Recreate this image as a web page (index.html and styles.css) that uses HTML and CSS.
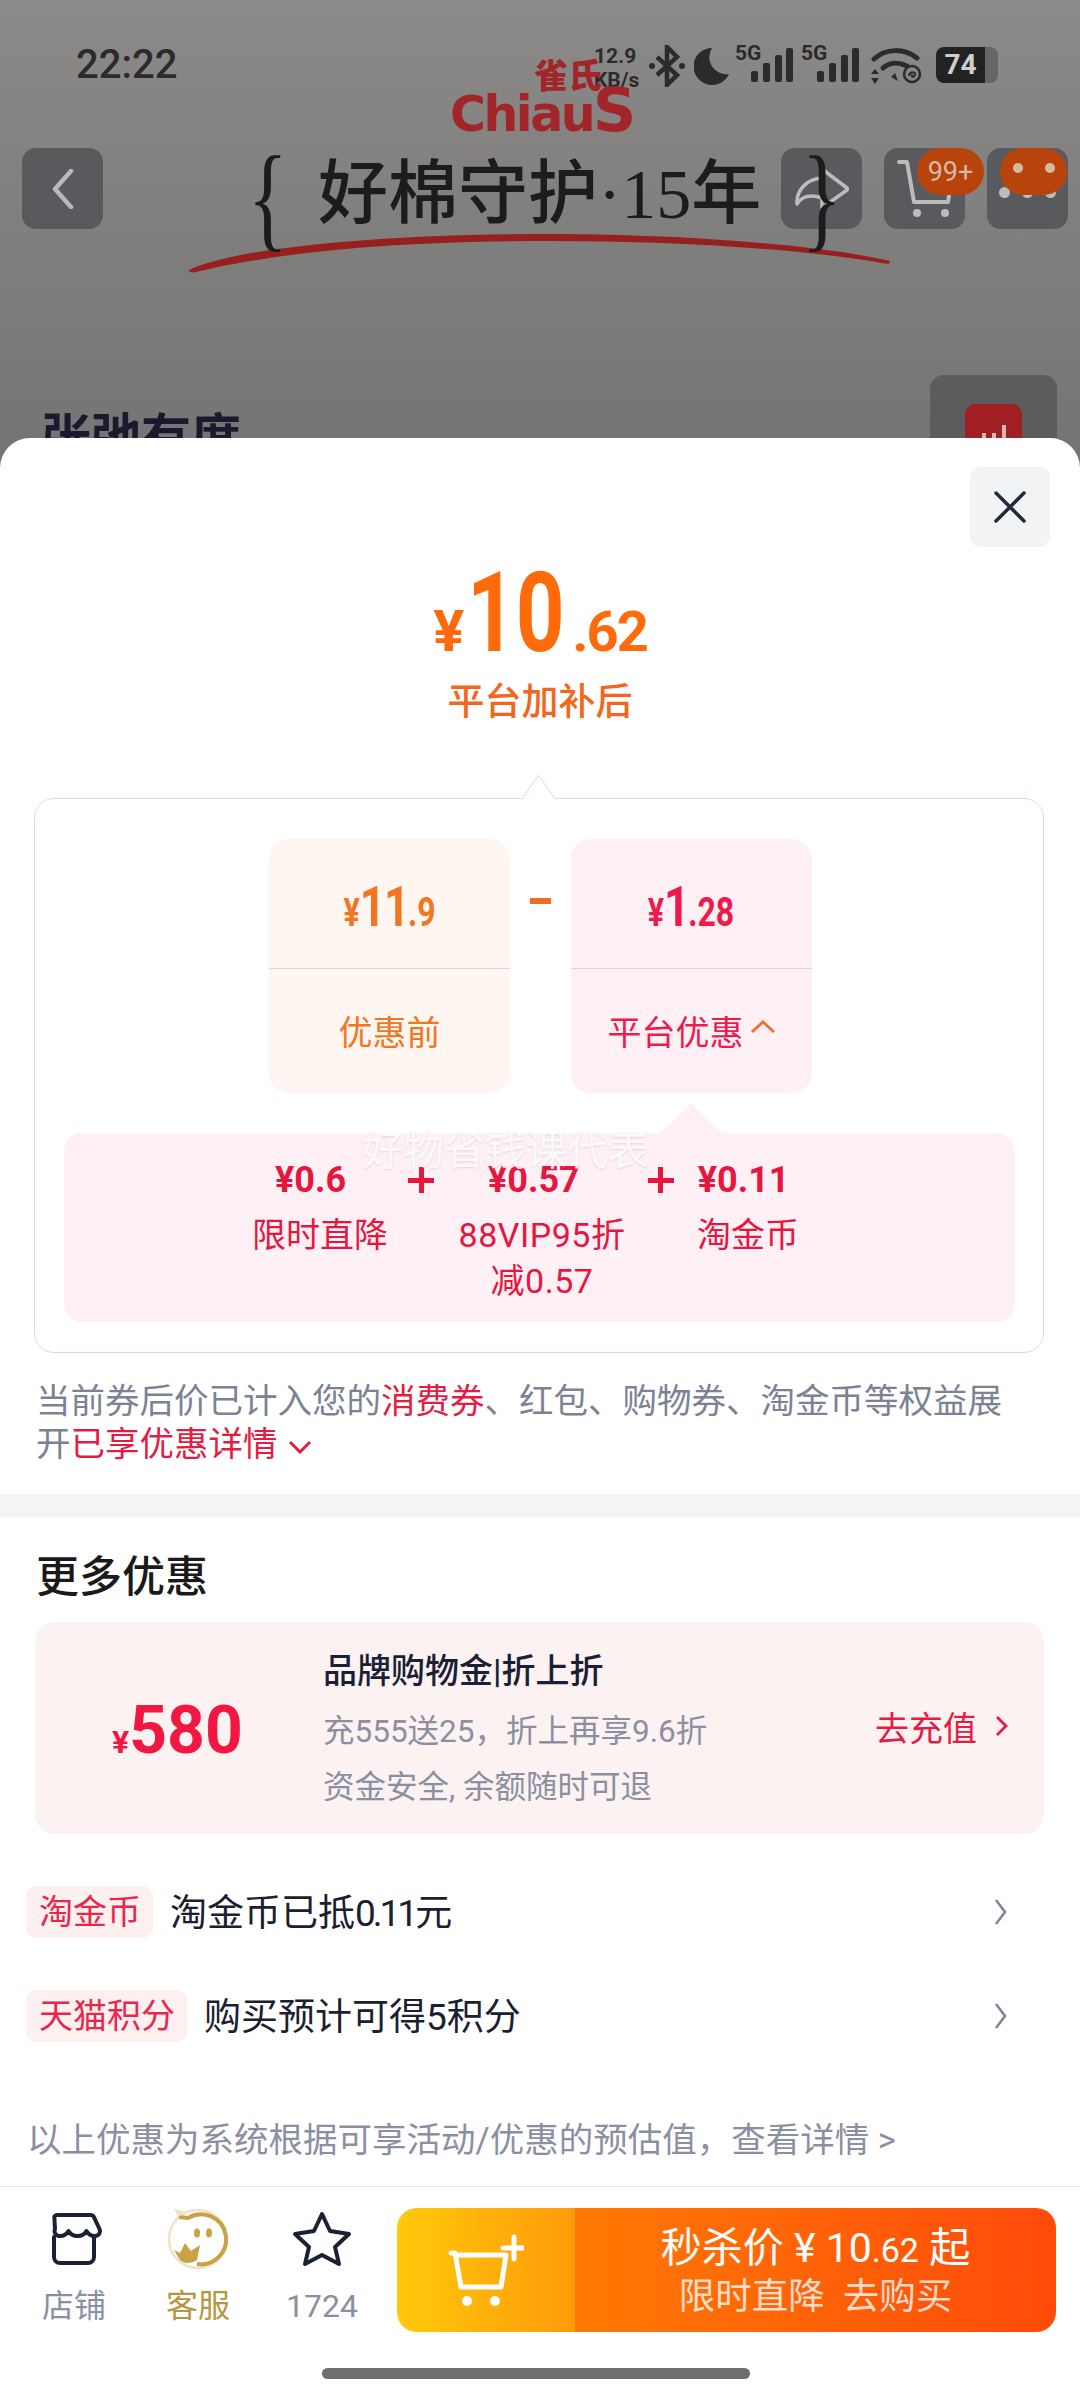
FILE: index.html
```html
<!doctype html>
<html lang="zh-CN">
    <head>
        <meta charset="UTF-8">
        <meta name="viewport" content="width=device-width, initial-scale=1.0">
        <title>平台加补后</title>

        <link rel="stylesheet" href="styles.css">
    </head>
    <body>
        <div class="page">
            <!-- dimmed product page behind the sheet -->
            <div class="backdrop">
                <div class="status">
                    <span class="status__time">22:22</span>
                    <div class="status__right">
                        <span class="status__speed">12.9<br>KB/s</span>
                        <svg class="status__bt" width="36" height="42" viewBox="0 0 36 42"><path d="M8 12l20 18-10 10V2l10 10L8 30" fill="none" stroke="#2b2b2b" stroke-width="4.5"/><circle cx="3" cy="21" r="3" fill="#2b2b2b"/><circle cx="33" cy="21" r="3" fill="#2b2b2b"/></svg>
                        <svg class="status__moon" width="36" height="38" viewBox="0 0 36 38"><path d="M18 1A18.500 18.500 0 1 0 35 27 17 17 0 0 1 18 1z" fill="#2b2b2b"/></svg>
                        <div class="signal">
                            <span class="signal__label">5G</span>
                            <svg width="42" height="34" viewBox="0 0 42 34"><g fill="#2b2b2b"><rect x="0" y="23" width="7" height="11" rx="2"/><rect x="12" y="15" width="7" height="19" rx="2"/><rect x="24" y="7" width="7" height="27" rx="2"/><rect x="35" y="0" width="7" height="34" rx="2"/></g></svg>
                        </div>
                        <div class="signal">
                            <span class="signal__label">5G</span>
                            <svg width="42" height="34" viewBox="0 0 42 34"><g fill="#2b2b2b"><rect x="0" y="23" width="7" height="11" rx="2"/><rect x="12" y="15" width="7" height="19" rx="2"/><rect x="24" y="7" width="7" height="27" rx="2"/><rect x="35" y="0" width="7" height="34" rx="2"/></g></svg>
                        </div>
                        <svg class="status__wifi" width="52" height="36" viewBox="0 0 52 36"><g fill="none" stroke="#2b2b2b" stroke-linecap="round"><path d="M3 11C15 0 33 0 46 10" stroke-width="5"/><path d="M12 20c7-6 16-6 24-2" stroke-width="5"/><circle cx="41" cy="26" r="8" stroke-width="2.500"/><path d="M38 27c2-4 7-3 6 0s-4 2-3 0" stroke-width="2"/></g><path d="M4 21l4 5H0zM4 36l4-6H0zM24 25l3 8-7-4z" fill="#2b2b2b"/></svg>
                        <div class="battery"><span class="battery__level">74</span></div>
                    </div>
                </div>

                <div class="nav">
                    <div class="nav__btn">
                        <svg width="24" height="40" viewBox="0 0 24 40"><path d="M20 2L4 20l16 18" fill="none" stroke="#b9b9b9" stroke-width="4.500" stroke-linecap="round" stroke-linejoin="round"/></svg>
                    </div>
                    <div class="nav__group">
                        <div class="nav__btn">
                            <svg width="54" height="43" viewBox="0 0 54 43"><path d="M27 2l25 19a1.500 1.500 0 0 1 0 2L27 41V31C15 27 7 29 2 37 1 24 11 12 27 11z" fill="none" stroke="#bcbcbc" stroke-width="3.500" stroke-linejoin="round"/></svg>
                        </div>
                        <div class="nav__btn">
                            <svg width="56" height="60" viewBox="0 0 56 60"><path d="M2 3h8l7 40h34l3-20" fill="none" stroke="#bcbcbc" stroke-width="4" stroke-linecap="round" stroke-linejoin="round"/><circle cx="20" cy="54" r="4" fill="#bcbcbc"/><circle cx="48" cy="54" r="4" fill="#bcbcbc"/></svg>
                            <span class="nav__badge">99+</span>
                        </div>
                        <div class="nav__btn">
                            <span class="nav__dots"><i></i><i></i><i></i></span>
                            <span class="nav__badge nav__badge--face"><i></i><i></i></span>
                        </div>
                    </div>
                </div>

                <div class="poster">
                    <div class="poster__logo">
                        <span class="poster__cn">雀氏</span>
                        <span class="poster__en">Chiau<b>S</b></span>
                    </div>
                    <svg class="poster__swoosh" width="704" height="40" viewBox="0 0 704 40"><path d="M1 36C40 16 180 0 360 0c140 0 280 12 342 27l-1 3C620 16 500 7 360 7 220 7 100 16 8 38c-4 1-8 0-7-2z" fill="#97201f"/></svg>
                    <span class="poster__brace poster__brace--left">{</span>
                    <span class="poster__title">好棉守护·15年</span>
                    <span class="poster__brace poster__brace--right">}</span>
                </div>

                <div class="heading">
                    <span class="heading__name">张弛有度</span>
                    <div class="heading__btn"><span class="heading__chart"><i></i><i></i><i></i></span></div>
                </div>
            </div>

            <!-- price detail sheet -->
            <div class="sheet">
                <div class="sheet__top">
                    <div class="close">
                        <svg width="34" height="34" viewBox="0 0 34 34"><path d="M3 3l28 28M31 3L3 31" fill="none" stroke="#1f2a3d" stroke-width="3.500" stroke-linecap="round"/></svg>
                    </div>
                </div>

                <div class="price">
                    <div class="price__num"><span class="price__yen">¥</span><span class="price__int">10</span><span class="price__dec">.62</span></div>
                    <div class="price__label">平台加补后</div>
                </div>

                <div class="calc">
                    <div class="calc__row">
                        <div class="tile tile--orange">
                            <div class="tile__value"><div class="tile__num"><span class="tile__yen">¥</span><span class="tile__int">11</span><span class="tile__dec">.9</span></div></div>
                            <div class="tile__label">优惠前</div>
                        </div>
                        <span class="calc__minus"></span>
                        <div class="tile tile--red">
                            <div class="tile__value"><div class="tile__num"><span class="tile__yen">¥</span><span class="tile__int">1</span><span class="tile__dec">.28</span></div></div>
                            <div class="tile__label">平台优惠
                                <svg class="tile__caret" width="26" height="14" viewBox="0 0 26 14"><path d="M2 12L13 2l11 10" fill="none" stroke="#f0703a" stroke-width="3"/></svg>
                            </div>
                        </div>
                    </div>
                    <div class="breakdown">
                        <div class="breakdown__prices">
                            <span class="breakdown__price">¥0.6</span>
                            <span class="breakdown__plus"></span>
                            <span class="breakdown__price">¥0.57</span>
                            <span class="breakdown__plus"></span>
                            <span class="breakdown__price">¥0.11</span>
                        </div>
                        <div class="breakdown__labels">
                            <span class="breakdown__label">限时直降</span>
                            <span class="breakdown__label breakdown__label--wide">88VIP95折<br>减0.57</span>
                            <span class="breakdown__label">淘金币</span>
                        </div>
                        <span class="breakdown__mark">好物省钱课代表</span>
                    </div>
                </div>

                <p class="note">当前券后价已计入您的<em>消费券</em>、红包、购物券、淘金币等权益展<br>开<em>已享优惠详情</em>
                    <svg class="note__caret" width="24" height="14" viewBox="0 0 24 14"><path d="M2 2l10 10L22 2" fill="none" stroke="#e51c42" stroke-width="3"/></svg>
                </p>

                <div class="band"></div>

                <h2 class="more">更多优惠</h2>

                <div class="promo">
                    <div class="promo__amount"><span class="promo__yen">¥</span>580</div>
                    <div class="promo__text">
                        <div class="promo__title">品牌购物金|折上折</div>
                        <div class="promo__sub">充555送25，折上再享9.6折</div>
                        <div class="promo__sub">资金安全, 余额随时可退</div>
                    </div>
                    <div class="promo__go">去充值
                        <svg width="13" height="22" viewBox="0 0 13 22"><path d="M2 2l9 9-9 9" fill="none" stroke="#e51c42" stroke-width="2.800"/></svg>
                    </div>
                </div>

                <div class="row">
                    <span class="row__tag">淘金币</span>
                    <span class="row__text">淘金币已抵<span class="row__num">0.11</span>元</span>
                    <svg class="row__arrow" width="13" height="28" viewBox="0 0 13 28"><path d="M2 2l9 12-9 12" fill="none" stroke="#7d8596" stroke-width="2.500"/></svg>
                </div>
                <div class="row">
                    <span class="row__tag">天猫积分</span>
                    <span class="row__text">购买预计可得5积分</span>
                    <svg class="row__arrow" width="13" height="28" viewBox="0 0 13 28"><path d="M2 2l9 12-9 12" fill="none" stroke="#7d8596" stroke-width="2.500"/></svg>
                </div>

                <p class="foot">以上优惠为系统根据可享活动/优惠的预估值，查看详情 &gt;</p>

                <div class="bar">
                    <div class="bar__item">
                        <svg width="56" height="54" viewBox="0 0 56 54"><g fill="none" stroke="#1a2035" stroke-width="4" stroke-linejoin="round" stroke-linecap="round"><path d="M11 3h34a3 3 0 0 1 2.700 1.700l5.800 12.300c1.500 4-1 7-5 7-3.500 0-6-1.500-8-5-2 3.500-5 5-9 5s-7-1.500-9-5c-2 3.500-5 5-8.500 5-4 0-6.500-3-5-7L8.300 4.700A3 3 0 0 1 11 3z"/><path d="M8 25v20a6 6 0 0 0 6 6h28a6 6 0 0 0 6-6V25"/></g></svg>
                        <span class="bar__label">店铺</span>
                    </div>
                    <div class="bar__item bar__item--gold">
                        <svg width="62" height="62" viewBox="0 0 62 62"><circle cx="31" cy="31" r="29" fill="none" stroke="#eee3c6" stroke-width="2.500"/><path d="M12 9l9 1A25 25 0 1 1 30 56" fill="none" stroke="#c9a246" stroke-width="4"/><path d="M11 9L7 1l13 3z" fill="#eee3c6"/><ellipse cx="30" cy="25" rx="3" ry="4.500" fill="#c9a246"/><ellipse cx="42" cy="25" rx="3" ry="4.500" fill="#c9a246"/><path d="M7 42l6 3 5-10 6 8 9-6-3 15c-6 4-13 4-17 0z" fill="#c9a246"/></svg>
                        <span class="bar__label">客服</span>
                    </div>
                    <div class="bar__item">
                        <svg width="60" height="56" viewBox="0 0 60 56"><path d="M30 3l8 17 19 3-14 13 4 17-17-9-17 9 4-17L3 23l19-3z" fill="none" stroke="#1a2035" stroke-width="4" stroke-linejoin="round"/></svg>
                        <span class="bar__label">1724</span>
                    </div>
                    <div class="buy">
                        <div class="buy__cart">
                            <svg width="76" height="74" viewBox="0 0 76 74"><g fill="none" stroke="#fff" stroke-width="5" stroke-linecap="round" stroke-linejoin="round"><path d="M3 20h4l6 34h40l5-32H8"/><path d="M66 4v22M55 15h21"/></g><circle cx="19" cy="68" r="5" fill="#fff"/><circle cx="47" cy="68" r="5" fill="#fff"/></svg>
                        </div>
                        <div class="buy__text">
                            <span class="buy__main">秒杀价 ¥ 10<small>.62</small> 起</span>
                            <span class="buy__sub">限时直降&nbsp;&nbsp;去购买</span>
                        </div>
                    </div>
                </div>

                <div class="home"></div>
            </div>
        </div>
    </body>
</html>
```

FILE: styles.css
```css
/* base */
* {
    box-sizing: border-box;
    padding: 0;
    margin: 0;
}

body {
    font-family: Roboto, "Noto Sans CJK SC", sans-serif;
    background-color: #fff;
}

em {
    font-style: normal;
}

.page {
    position: relative;
    width: 1080px;
    height: 2400px;
    overflow: hidden;
    background: linear-gradient(#8b8a88, #737373 480px);
}

/* backdrop */
.backdrop {
    position: relative;
    height: 438px;
    overflow: hidden;
}

.status {
    display: flex;
    justify-content: space-between;
    height: 148px;
    padding: 44px 82px 0 76px;
    color: #2b2b2b;
}

.status__time {
    font-size: 40px;
    font-weight: 500;
    line-height: 42px;
}

.status__right {
    display: flex;
    align-items: flex-start;
    height: 42px;
}

.status__speed {
    width: 55px;
    font-size: 21px;
    font-weight: 700;
    line-height: 24px;
    text-align: left;
}

.status__bt {
    margin-top: 1px;
}

.status__moon {
    margin: 3px 5px 0 9px;
}

.signal {
    position: relative;
    width: 66px;
    height: 40px;
}

.signal svg {
    position: absolute;
    top: 4px;
    left: 16px;
}

.signal__label {
    position: absolute;
    top: -3px;
    left: 0;
    font-size: 21px;
    font-weight: 700;
    line-height: 24px;
}

.status__wifi {
    margin: 4px 13px 0 4px;
}

.battery {
    width: 62px;
    height: 36px;
    margin-top: 3px;
    border-radius: 8px;
    background: linear-gradient(90deg, #222 79%, #666 79%);
}

.battery__level {
    display: block;
    width: 49px;
    font-size: 28px;
    font-weight: 700;
    line-height: 36px;
    color: #cfcfcf;
    text-align: center;
}

.nav {
    display: flex;
    justify-content: space-between;
    padding: 0 12px 0 22px;
}

.nav__group {
    display: flex;
    gap: 22px;
}

.nav__btn {
    position: relative;
    display: flex;
    align-items: center;
    justify-content: center;
    width: 81px;
    height: 81px;
    border-radius: 14px;
    background-color: #595a5d;
}

.nav__badge {
    position: absolute;
    top: 0;
    right: -19px;
    display: flex;
    align-items: center;
    justify-content: center;
    gap: 22px;
    width: 67px;
    height: 47px;
    border-radius: 24px;
    font-size: 27px;
    color: #d6b8a6;
    background-color: #b8440c;
}

.nav__badge--face {
    right: 1px;
}

.nav__badge--face i {
    width: 10px;
    height: 10px;
    margin-top: -8px;
    border-radius: 50%;
    background-color: #d8b9a5;
}

.nav__dots {
    display: flex;
    gap: 12px;
    margin-top: 8px;
}

.nav__dots i {
    width: 11px;
    height: 11px;
    border-radius: 50%;
    background-color: #bcbcbc;
}

/* the banner picture printed on the product page */
.poster {
    position: absolute;
    inset: 0;
}

.poster__logo {
    position: absolute;
    top: 58px;
    left: 448px;
    width: 190px;
    color: #a2252a;
}

.poster__cn {
    position: absolute;
    top: 0;
    left: 86px;
    font-size: 34px;
    font-weight: 900;
    line-height: 36px;
}

.poster__en {
    position: absolute;
    top: 22px;
    left: 2px;
    font-family: "DejaVu Sans", sans-serif;
    font-size: 49px;
    font-weight: 700;
    line-height: 60px;
    letter-spacing: -2.500px;
}

.poster__en b {
    font-size: 60px;
}

.poster__swoosh {
    position: absolute;
    top: 234px;
    left: 188px;
}

.poster__title {
    position: absolute;
    top: 150px;
    left: 318px;
    font-family: "Liberation Serif", "Noto Sans CJK SC", serif;
    font-size: 70px;
    font-weight: 500;
    line-height: 90px;
    color: #1d1b1b;
    white-space: nowrap;
}

.poster__brace {
    position: absolute;
    top: 132px;
    font-family: "Liberation Serif", serif;
    font-size: 116px;
    line-height: 130px;
    color: #1d1b1b;
    transform: scaleX(0.72);
}

.poster__brace--left {
    left: 240px;
}

.poster__brace--right {
    left: 794px;
}

.heading {
    position: absolute;
    top: 375px;
    left: 41px;
    right: 23px;
    display: flex;
    justify-content: space-between;
}

.heading__name {
    margin-top: 33px;
    font-size: 50px;
    font-weight: 700;
    line-height: 60px;
    color: #1a1a2e;
}

.heading__btn {
    display: flex;
    justify-content: center;
    width: 127px;
    height: 120px;
    padding-top: 29px;
    border-radius: 14px;
    background-color: #5b5c5e;
}

.heading__chart {
    display: flex;
    align-items: flex-end;
    justify-content: center;
    gap: 6px;
    width: 57px;
    height: 60px;
    padding-bottom: 24px;
    border-radius: 10px;
    background-color: #a01f22;
}

.heading__chart i {
    width: 4px;
    height: 7px;
    background-color: #d8b4b4;
}

.heading__chart i:last-child {
    height: 15px;
}

/* sheet */
.sheet {
    height: 1962px;
    border-radius: 30px 30px 0 0;
    background-color: #fff;
}

.sheet__top {
    display: flex;
    justify-content: flex-end;
    padding: 29px 30px 0;
}

.close {
    display: flex;
    align-items: center;
    justify-content: center;
    width: 80px;
    height: 80px;
    border-radius: 10px;
    background-color: #f2f3f5;
}

.price {
    text-align: center;
    color: #ff6a0a;
}

.price__num {
    display: flex;
    align-items: baseline;
    justify-content: center;
    height: 112px;
    margin-top: 10px;
    font-weight: 700;
    line-height: 112px;
}

.price__yen {
    margin-right: 3px;
    font-size: 58px;
}

/* the app's numerals are narrower than any installed font */
.price__int {
    display: inline-block;
    width: 99px;
    margin-right: 6px;
    font-size: 112px;
    transform: scaleX(0.76);
    transform-origin: left;
}

.price__dec {
    font-size: 56px;
    letter-spacing: -2px;
}

.price__label {
    margin-top: 10px;
    font-size: 37px;
    font-weight: 500;
    line-height: 48px;
    color: #f2671d;
}

/* calculation card */
.calc {
    position: relative;
    height: 555px;
    margin: 71px 36px 0 34px;
    padding: 40px 29px 0;
    border: 1.5px solid #f2d5ca;
    border-radius: 20px;
}

.calc::before {
    content: "";
    position: absolute;
    top: -15px;
    left: 489px;
    width: 28px;
    height: 28px;
    border-top: 1.5px solid #f2d5ca;
    border-left: 1.5px solid #f2d5ca;
    background-color: #fff;
    transform: rotate(45deg) skew(10deg, 10deg);
}

.calc__row {
    display: flex;
    justify-content: center;
    align-items: flex-start;
    margin-left: 3px;
}

.calc__minus {
    width: 21px;
    height: 6px;
    margin: 59px 20px 0;
    background-color: #ec6d2a;
}

.tile {
    width: 241px;
    height: 254px;
    border-radius: 20px;
    text-align: center;
}

.tile--orange {
    color: #f0761f;
    background-color: #fff5f1;
}

.tile--red {
    color: #ee1a4b;
    background-color: #fef0f4;
}

.tile__value {
    display: flex;
    justify-content: center;
    height: 130px;
    padding-top: 26px;
    border-bottom: 1.5px solid #efd0cd;
}

.tile__num {
    display: flex;
    align-items: baseline;
    height: 84px;
    font-weight: 700;
    line-height: 84px;
    transform: scaleX(0.8);
}

.tile__yen {
    font-size: 38px;
}

.tile__int {
    font-size: 56px;
    letter-spacing: -2px;
}

.tile__dec {
    font-size: 40px;
}

.tile__label {
    display: flex;
    align-items: center;
    justify-content: center;
    gap: 6px;
    height: 122px;
    font-size: 34px;
}

.tile__caret {
    margin-bottom: 6px;
}

.breakdown {
    position: relative;
    height: 189px;
    margin-top: 40px;
    margin-inline: 0 -0.5px;
    padding-top: 29px;
    border-radius: 18px;
    color: #e6163f;
    background-color: #fef0f4;
}

.breakdown::before {
    content: "";
    position: absolute;
    top: -30px;
    left: 596px;
    border-right: 31px solid transparent;
    border-bottom: 30px solid #fef0f4;
    border-left: 31px solid transparent;
}

.breakdown__prices {
    display: flex;
    align-items: center;
    height: 36px;
    padding-left: 211px;
}

.breakdown__price {
    font-size: 36px;
    font-weight: 700;
    line-height: 36px;
    white-space: nowrap;
}

.breakdown__plus {
    width: 26px;
    height: 26px;
    margin: 0 54px 0 62px;
    background:
        linear-gradient(#e6163f, #e6163f) center / 26px 5px no-repeat,
        linear-gradient(#e6163f, #e6163f) center / 5px 26px no-repeat;
}

.breakdown__plus:nth-child(4) {
    margin: 0 24px 0 68px;
}

.breakdown__labels {
    display: flex;
    align-items: flex-start;
    margin-top: 14px;
    padding-left: 188px;
    font-size: 34px;
    line-height: 46px;
    text-align: center;
    white-space: nowrap;
}

.breakdown__label--wide {
    width: 172px;
    margin: 0 69px 0 68px;
    letter-spacing: 0.5px;
}

.breakdown__mark {
    position: absolute;
    top: -7px;
    left: 298px;
    font-size: 41px;
    line-height: 50px;
    color: rgba(255, 255, 255, 0.85);
    text-shadow: 0 1px 2px rgba(120, 120, 120, 0.2);
    white-space: nowrap;
}

.note {
    margin: 27px 20px 0 36px;
    font-size: 34.500px;
    line-height: 43px;
    color: #7a8294;
    white-space: nowrap;
}

.note em {
    color: #e51c42;
}

.note__caret {
    margin-left: 2px;
    vertical-align: 2px;
}

.band {
    height: 23px;
    margin-top: 28px;
    background-color: #f3f4f6;
}

.more {
    margin: 32px 0 0 36px;
    font-size: 43px;
    font-weight: 500;
    line-height: 56px;
    color: #1a1a1a;
}

/* promo card */
.promo {
    display: flex;
    align-items: center;
    height: 212px;
    margin: 17px 36px 0 35px;
    padding-left: 77px;
    border-radius: 20px;
    background-color: #fdf2f2;
}

.promo__amount {
    width: 211px;
    padding-top: 5px;
    font-size: 66px;
    font-weight: 700;
    color: #f01842;
}

.promo__yen {
    font-size: 32px;
}

.promo__text {
    width: 552px;
    padding-top: 2px;
}

.promo__title {
    font-size: 34px;
    font-weight: 500;
    line-height: 46px;
    color: #1a1f35;
}

.promo__sub {
    margin-top: 10px;
    font-size: 31.500px;
    line-height: 46px;
    color: #8a90a2;
    white-space: nowrap;
}

.promo__title + .promo__sub {
    margin-top: 15px;
}

.promo__go {
    display: flex;
    align-items: center;
    gap: 18px;
    margin-top: -4px;
    font-size: 34px;
    color: #e51c42;
    white-space: nowrap;
}

/* benefit rows */
.row {
    display: flex;
    align-items: center;
    height: 52px;
    margin-top: 52px;
    padding: 0 73px 0 26px;
}

.row + .row {
    margin-top: 52px;
}

.row__tag {
    height: 52px;
    margin-top: -1px;
    padding: 0 12px 0 13px;
    border-radius: 10px;
    font-size: 34px;
    line-height: 52px;
    color: #e8274e;
    background-color: #fdf0ef;
}

.row__text {
    margin-top: -5px;
    margin-left: 17px;
    font-size: 37px;
    color: #1a2030;
}

.row__num {
    letter-spacing: -3px;
}

.row__arrow {
    margin-left: auto;
}

.foot {
    margin: 75px 0 0 27px;
    font-size: 34.500px;
    line-height: 46px;
    color: #8a90a2;
    white-space: nowrap;
}

/* bottom bar */
.bar {
    position: relative;
    display: flex;
    height: 160px;
    margin-top: 23px;
    padding: 21px 24px 0 46px;
    border-top: 1.5px solid #e4e4e6;
}

.bar__item {
    display: flex;
    flex-direction: column;
    align-items: center;
    width: 56px;
    margin-right: 68px;
    font-size: 32px;
    color: #8a90a2;
}

.bar__item svg {
    flex: none;
    height: 62px;
}

.bar__item--gold {
    color: #b8963f;
}

.bar__label {
    margin-top: 13px;
    line-height: 46px;
    white-space: nowrap;
}

.bar__item:nth-child(3) {
    margin-right: 0;
}

.buy {
    position: absolute;
    top: 21px;
    right: 24px;
    display: flex;
    width: 659px;
    height: 124px;
    overflow: hidden;
    border-radius: 20px;
    color: #fff;
}

.buy__cart {
    display: flex;
    align-items: center;
    justify-content: center;
    width: 178px;
    background: linear-gradient(90deg, #ffc90a, #ff9a0a);
}

.buy__text {
    display: flex;
    flex: 1;
    flex-direction: column;
    align-items: center;
    padding-top: 15px;
    background: linear-gradient(90deg, #ff7a05, #ff4a0a);
}

.buy__main {
    font-size: 41px;
    line-height: 50px;
    white-space: nowrap;
}

.buy__main small {
    font-size: 34px;
}

.buy__sub {
    font-size: 36.500px;
    line-height: 44px;
    color: rgba(255, 255, 255, 0.78);
    white-space: nowrap;
}

.home {
    position: absolute;
    bottom: 21px;
    left: 322px;
    width: 428px;
    height: 11px;
    border-radius: 6px;
    background-color: #6e6e6e;
}
```
